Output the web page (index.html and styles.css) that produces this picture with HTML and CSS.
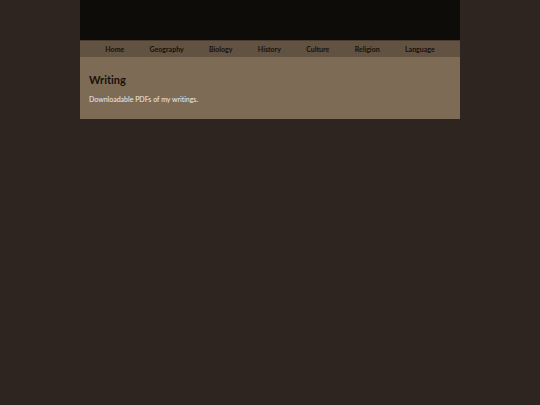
FILE: index.html
```html
<!DOCTYPE html>
<html lang="en">

<head>
    <meta charset="UTF-8">
    <meta name="viewport" content="width=device-width, initial-scale=1.0">
    <title>Writing</title>
    <link rel="stylesheet" href="styles.css">
</head>

<body>
    <div class="container">
        <header class="banner"></header>

        <nav class="navbar">
            <a href="#home">Home</a>
            <a href="#geography">Geography</a>
            <a href="#biology">Biology</a>
            <a href="#history">History</a>
            <a href="#culture">Culture</a>
            <a href="#religion">Religion</a>
            <a href="#language">Language</a>
        </nav>

        <main class="content">
            <h1>Writing</h1>
            <p>Downloadable PDFs of my writings.</p>
        </main>
    </div>
</body>

</html>
```

FILE: styles.css
```css
:root {
    --page-bg: #2e2520;
    --banner-bg: #0e0c08;
    --nav-bg: #625242;
    --content-bg: #7d6b56;
    --dark-text: #17110c;
    --light-text: #f3e9e4;
}

* {
    margin: 0;
    padding: 0;
    box-sizing: border-box;
}

body {
    background-color: var(--page-bg);
    color: var(--light-text);
    font-family: Lato, sans-serif;
    font-size: 7px;
    line-height: 10px;
    font-variant-ligatures: none;
}

.container {
    max-width: 380px;
    margin: 0 auto;
}

.banner {
    height: 40px;
    background-color: var(--banner-bg);
}

.navbar {
    display: flex;
    justify-content: space-evenly;
    padding: 3px 0;
    background-color: var(--nav-bg);
    border-top: 1px solid #4a3c30;
}

.navbar a {
    color: var(--dark-text);
    font-weight: bold;
    text-decoration: none;
}

.content {
    padding: 16px 9px 15px;
    background-color: var(--content-bg);
}

.content h1 {
    margin-bottom: 7px;
    color: var(--dark-text);
    font-size: 11px;
    line-height: 14px;
}
```
